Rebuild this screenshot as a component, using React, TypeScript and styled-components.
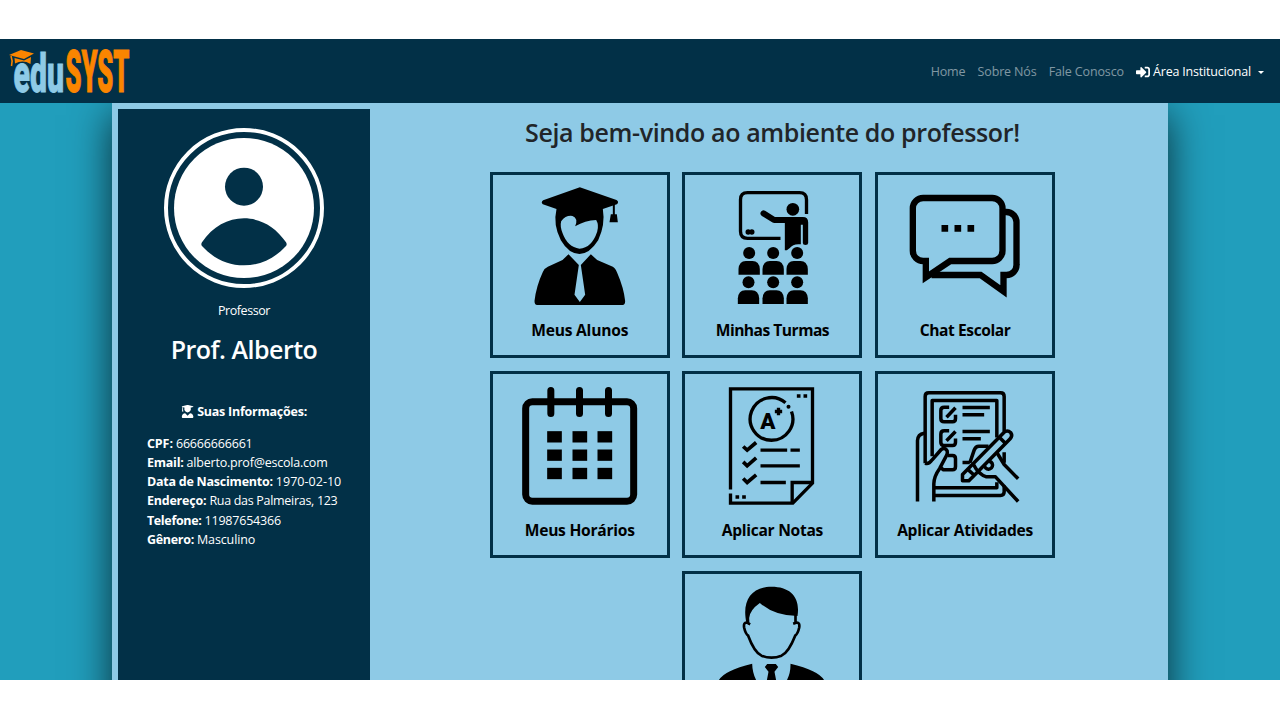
import React from "react";
import styled, { createGlobalStyle } from "styled-components";
import { FaSignInAlt, FaUserGraduate } from "react-icons/fa";

const navy = "#023047";
const sky = "#8ecae6";
const teal = "#219ebc";
const orange = "#fb8500";

const Global = createGlobalStyle`
  * { box-sizing: border-box; }
  body { margin: 0; background: #fff; }
  svg { display: block; }
`;

const Frame = styled.div`
  height: 720px;
  padding: 39px 0 40px;
  overflow: hidden;
  font-family: "Open Sans", "Noto Sans", sans-serif;
  font-size: 12.5px;
`;
const Screen = styled.div`
  height: 641px;
  overflow: hidden;
  background: ${teal};
`;
const Navbar = styled.header`
  position: relative;
  z-index: 1;
  height: 64px;
  padding: 0 16px 0 8px;
  display: flex;
  justify-content: space-between;
  align-items: center;
  background: ${navy};
`;
const LogoArt = styled.svg`
  width: 150px;
  height: 64px;
  overflow: visible;
`;
const Menu = styled.nav`
  margin-top: 2px;
  display: flex;
  align-items: center;
  gap: 12.2px;
`;
const MenuItem = styled.a<{ $active?: boolean; $tracking: number }>`
  display: flex;
  align-items: center;
  line-height: 20px;
  color: ${(p) => (p.$active ? "#fff" : "rgba(255,255,255,.5)")};
  letter-spacing: ${(p) => p.$tracking}px;
  white-space: nowrap;
  svg { width: 14px; height: 14px; margin: -1px 3px 0 0; }
`;
const Caret = styled.span`
  margin-left: 7px;
  border: 3.8px solid transparent;
  border-top-color: #fff;
  border-bottom: 0;
`;
const Container = styled.main`
  width: 1056px;
  height: 900px;
  margin: 0 auto;
  padding: 5.7px;
  display: flex;
  background: ${sky};
  box-shadow: 0 12px 38px rgba(0, 0, 0, 0.72);
`;
const Sidebar = styled.aside`
  width: 252.6px;
  flex: none;
  padding-top: 19px;
  display: flex;
  flex-direction: column;
  align-items: center;
  color: #fff;
  background: ${navy};
`;
const Role = styled.p<{ $tracking: number }>`
  margin: 13px 0 0;
  line-height: 20px;
  letter-spacing: ${(p) => p.$tracking}px;
`;
const PersonName = styled.h2`
  margin: 13px 0 0;
  font-size: 25px;
  font-weight: 650;
  line-height: 30px;
  letter-spacing: -0.5px;
`;
const InfoTitle = styled.div`
  margin-top: 38px;
  display: flex;
  align-items: center;
  gap: 3px;
  height: 20px;
  font-weight: 700;
  letter-spacing: -0.24px;
`;
const InfoList = styled.dl`
  align-self: stretch;
  margin: 12.2px 0 0;
  padding-left: 29.2px;
`;
const InfoRow = styled.div`
  display: flex;
  gap: 3px;
  height: 19.2px;
  line-height: 19.2px;
  white-space: nowrap;
`;
const Term = styled.dt<{ $tracking: number }>`
  font-weight: 700;
  letter-spacing: ${(p) => p.$tracking}px;
`;
const Detail = styled.dd<{ $tracking: number }>`
  margin: 0;
  letter-spacing: ${(p) => p.$tracking}px;
`;
const Content = styled.section`
  flex: 1;
  padding-left: 12.2px;
  display: flex;
  flex-direction: column;
  align-items: center;
`;
const Title = styled.h1`
  margin: 8px 0 0;
  height: 55.1px;
  line-height: 30px;
  font-size: 25px;
  font-weight: 600;
  letter-spacing: -0.37px;
  color: #212529;
`;
const Cards = styled.div`
  width: 580px;
  display: flex;
  flex-wrap: wrap;
  justify-content: center;
  gap: 13px 12.7px;
`;
const Card = styled.a`
  width: 180px;
  height: 186.5px;
  padding-top: 12.5px;
  display: flex;
  flex-direction: column;
  align-items: center;
  border: 3.2px solid ${navy};
`;
const CardLabel = styled.span<{ $tracking: number }>`
  margin-top: 11.2px;
  font-size: 15.6px;
  font-weight: 700;
  line-height: 24px;
  letter-spacing: ${(p) => p.$tracking}px;
  color: #000;
  white-space: nowrap;
`;

const Logo = () => (
  <LogoArt viewBox="8 39 150 64" fontFamily="Roboto, sans-serif" fontWeight="900">
    <text x="13.5" y="91.5" fontSize="54" fill={sky} stroke={sky} strokeWidth="0.9" textLength="50.5" lengthAdjust="spacingAndGlyphs">edu</text>
    <text x="65.5" y="91.6" fontSize="59" fill={orange} stroke={orange} strokeWidth="1.1" textLength="64" lengthAdjust="spacingAndGlyphs">SYST</text>
    <path d="M9 55L21 50L34 53.5L24 59Z" fill={orange} />
    <path d="M14.5 58L24 60.5L31 57L30.5 64Q23 59.5 15 63.5Z" fill={orange} />
    <path d="M11 56Q13 61 11.5 66" fill="none" stroke={orange} strokeWidth="1.6" />
  </LogoArt>
);

const Avatar = () => (
  <svg width="160" height="160" viewBox="222 83 480 480">
    <circle cx="462" cy="323" r="234" fill="none" stroke="#fff" strokeWidth="12" />
    <circle cx="462" cy="323" r="210" fill="#fff" />
    <circle cx="462" cy="259" r="57" fill={navy} />
    <path d="M336 426C368 378 414 354 462 354S556 378 588 426Q592 432 588 437C552 476 510 495 462 495S372 476 336 437Q332 432 336 426Z" fill={navy} />
  </svg>
);

const Graduate = () => (
  <svg width="120" height="120" viewBox="106.5 232 360 360">
    <path fillRule="evenodd" d="M216 298L175 284Q168 278 176 272L286 233L396 271Q405 277 397 284L355 298Q363 345 341 392Q315 433 285 433Q253 433 229 392Q205 345 216 298ZM230 335Q244 316 264 319Q282 326 272 350Q302 332 335 331Q344 346 338 366Q322 414 285 417Q249 412 234 370Q226 350 230 335Z" />
    <path d="M385 282H391V314H397L400 338H375L379 314H385Z" />
    <path d="M252 434L283 466L270 555L286 577L302 555L289 466L319 434L338 451L385 471Q393 475 398 489Q418 535 422 574Q422 586 414 586H158Q150 586 150 574Q155 530 175 487Q180 475 190 471L234 451Z" />
  </svg>
);

const Classroom = () => (
  <svg width="120" height="120" viewBox="97.5 57 360 360">
    <path d="M381 138V95Q381 74 360 74H204Q183 74 183 95V190Q183 211 204 211H303" fill="none" stroke="#000" strokeWidth="10" />
    <circle cx="340" cy="124" r="19" />
    <path d="M252 136L284 156H330" fill="none" stroke="#000" strokeWidth="18" strokeLinecap="round" strokeLinejoin="round" />
    <path d="M316 147H370Q386 147 386 163V225Q386 231 378 231Q370 231 370 225V170H364V229Q341 226 331 240L322 247H316Z" />
    <circle cx="206" cy="192" r="8" />
    <circle cx="217" cy="192" r="8" />
    {[[209, 255], [281, 255], [353, 255], [207, 343], [281, 343], [353, 343]].map(([x, y]) => (
      <g key={`${x}-${y}`}>
        <circle cx={x} cy={y} r="18" />
        <path d={`M${x - 32} ${y + 65}V${y + 48}Q${x - 30} ${y + 24} ${x - 10} ${y + 24}H${x + 10}Q${x + 30} ${y + 24} ${x + 32} ${y + 48}V${y + 65}Z`} />
      </g>
    ))}
  </svg>
);

const Chat = () => (
  <svg width="120" height="120" viewBox="100.5 57 360 360">
    <g fill="none" stroke="#000" strokeWidth="19">
      <path d="M163 328V279H155A31 31 0 0 1 124 248V121A31 31 0 0 1 155 90H362A31 31 0 0 1 393 121V248A31 31 0 0 1 362 279H236Z" />
      <path d="M398 132H405A30 30 0 0 1 435 162V290A30 30 0 0 1 405 321H396V370L327 321H180" />
    </g>
    <path d="M210 171h20v20h-20zM249 171h20v20h-20zM288 171h20v20h-20z" />
  </svg>
);

const Calendar = () => (
  <svg width="120" height="120" viewBox="106.5 56.5 360 360">
    <rect x="123.5" y="101" width="324" height="298" rx="20" fill="none" stroke="#000" strokeWidth="21" />
    <path d="M199 67V136M285 67V136M372 67V136" stroke="#000" strokeWidth="21" strokeLinecap="round" />
    {[189, 244, 299].map((y) => [188, 264, 339].map((x) => <rect key={`${x}-${y}`} x={x} y={y} width="44" height="34" />))}
  </svg>
);

const Grades = () => (
  <svg width="120" height="120" viewBox="97.5 56.5 360 360">
    <g fill="none" stroke="#000" strokeWidth="10">
      <path d="M153 364V62H399V345L340 405H153V376" />
      <path d="M338 405V343H399" />
      <path d="M318 104A64 64 0 1 0 336 130" />
      <path d="M286 130H308M297 119V141" />
      <path d="M243 246H323M333 246H361M243 293H361M243 343H319" />
      <path d="M191 235L203 246L230 223M191 281L203 293L230 269M191 331L203 343L230 320" strokeWidth="11" />
    </g>
    <text x="242" y="182" fontFamily="Roboto, sans-serif" fontWeight="900" fontSize="67">A</text>
    <circle cx="327" cy="116" r="6" />
    <path d="M352 78h11v11h-11zM372 78h11v11h-11zM168 381h11v11h-11zM188 381h11v11h-11z" />
  </svg>
);

const Activities = () => (
  <svg width="120" height="120" viewBox="100.5 56.5 360 360">
    <g fill="none" stroke="#000" strokeWidth="10.5" strokeLinejoin="round">
      <path d="M161 285V85Q161 74 172 74H387Q398 74 398 85V190M190 382H387Q398 382 398 371V352M398 252V284" />
      <path d="M182 264V97H376V208M190 359H376V342" />
      <path d="M138 400V217Q139 198 158 195" />
      <path d="M161 285Q171 290 182 275L209 244Q220 236 227 248Q229 254 225 262L205 300Q187 325 187 347V400" />
      <path d="M233 117H218Q208 117 208 127V151Q208 161 218 161H243Q252 161 252 151V140M225 147L252 119" />
      <path d="M233 188H218Q208 188 208 198V222Q208 232 218 232H243Q252 232 252 222V211M225 218L252 190" />
      <path d="M229 262H243Q252 262 252 272V295Q252 305 243 305H216L207 298" />
      <path d="M273 118H355M273 140H338M273 190H355M273 212H328" />
      <path d="M351 234H322Q312 234 308 246L295 284M273 283H295" />
      <path d="M398 192Q408 184 418 194Q424 203 416 212L316 314L292 338H273V319ZM382 206L403 227M288 303L309 322" />
      <path d="M306 289Q321 319 345 326H372L440 400M376 253L398 289L440 332M339 291A12 12 0 1 0 350 279" />
    </g>
  </svg>
);

const Profile = () => (
  <svg width="120" height="120" viewBox="97.5 64 360 360">
    <path d="M201 176C186 108 215 66 276 66C333 66 363 98 354 154Q286 154 241 115Q211 136 209 160L210 182Z" />
    <path d="M212 179L203 174Q191 172 194 189Q198 207 206 213Q224 262 246 273Q276 285 306 273Q328 262 347 213Q355 207 359 189Q362 172 350 174L341 177M348 150V174" fill="none" stroke="#000" strokeWidth="8" />
    <path d="M115 424V355Q122 320 218 297Q219 335 240 362L262 424ZM437 424V355Q430 320 333 297Q334 335 312 362L290 424Z" />
    <path d="M263 298H289L296 307L285 321L300 400H252L267 321L256 307Z" />
  </svg>
);

const info: [string, number, string, number][] = [
  ["CPF:", -0.05, "66666666661", -0.18],
  ["Email:", -0.22, "alberto.prof@escola.com", -0.21],
  ["Data de Nascimento:", -0.23, "1970-02-10", 0.02],
  ["Endereço:", -0.2, "Rua das Palmeiras, 123", -0.3],
  ["Telefone:", -0.33, "11987654366", -0.2],
  ["Gênero:", -0.28, "Masculino", -0.12],
];

const cards: [string, number, () => React.JSX.Element][] = [
  ["Meus Alunos", -0.22, Graduate],
  ["Minhas Turmas", -0.51, Classroom],
  ["Chat Escolar", -0.42, Chat],
  ["Meus Horários", -0.26, Calendar],
  ["Aplicar Notas", -0.28, Grades],
  ["Aplicar Atividades", -0.27, Activities],
];

export default function App() {
  return (
    <Frame>
      <Global />
      <Screen>
        <Navbar>
          <Logo />
          <Menu>
            <MenuItem $tracking={-0.15}>Home</MenuItem>
            <MenuItem $tracking={-0.15}>Sobre Nós</MenuItem>
            <MenuItem $tracking={-0.14}>Fale Conosco</MenuItem>
            <MenuItem $active $tracking={-0.2}>
              <FaSignInAlt />
              Área Institucional
              <Caret />
            </MenuItem>
          </Menu>
        </Navbar>
        <Container>
          <Sidebar>
            <Avatar />
            <Role $tracking={-0.42}>Professor</Role>
            <PersonName>Prof. Alberto</PersonName>
            <InfoTitle>
              <FaUserGraduate size={13.2} />
              Suas Informações:
            </InfoTitle>
            <InfoList>
              {info.map(([term, termTracking, detail, detailTracking]) => (
                <InfoRow key={term}>
                  <Term $tracking={termTracking}>{term}</Term>
                  <Detail $tracking={detailTracking}>{detail}</Detail>
                </InfoRow>
              ))}
            </InfoList>
          </Sidebar>
          <Content>
            <Title>Seja bem-vindo ao ambiente do professor!</Title>
            <Cards>
              {cards.map(([label, tracking, Icon]) => (
                <Card key={label}>
                  <Icon />
                  <CardLabel $tracking={tracking}>{label}</CardLabel>
                </Card>
              ))}
              <Card>
                <Profile />
              </Card>
            </Cards>
          </Content>
        </Container>
      </Screen>
    </Frame>
  );
}
